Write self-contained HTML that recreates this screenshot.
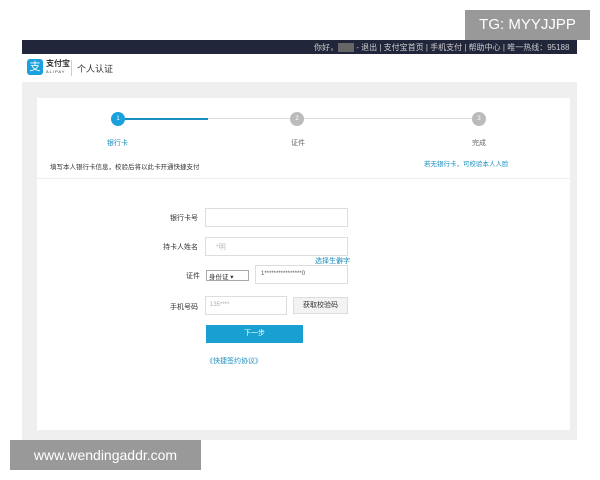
<!DOCTYPE html><html><head><meta charset="utf-8"><style>
*{margin:0;padding:0;box-sizing:border-box}
body{width:600px;height:480px;background:#fff;position:relative;font-family:"Liberation Sans","Noto Sans CJK SC",sans-serif;font-size:7px;color:#333;overflow:hidden}
.a{position:absolute}
.inp{position:absolute;border:1px solid #ddd;background:#fff;height:19px}
.c{position:absolute;width:14px;height:14px;border-radius:50%;color:#fff;font-size:6px;text-align:center;line-height:14px}
</style></head><body>
<div class="a" style="left:22px;top:40px;width:555px;height:14px;background:#22263a"></div>
<div class="a" style="left:314px;top:42px;color:#ccc;font-size:8px;white-space:nowrap">你好，<span style="background:#666;color:#666">xxxx</span> - 退出 | 支付宝首页 | 手机支付 | 帮助中心 | 唯一热线：95188</div>
<div class="a" style="left:22px;top:54px;width:555px;height:28px;background:#fff"></div>
<div class="a" style="left:27px;top:59px;width:16px;height:16px;background:#1aa0dc;border-radius:3px;color:#fff;font-size:11px;text-align:center;line-height:16px">支</div>
<div class="a" style="left:46px;top:58px;font-size:8px;font-weight:bold;color:#333">支付宝</div>
<div class="a" style="left:46px;top:69px;font-size:4px;letter-spacing:1px;color:#333">ALIPAY</div>
<div class="a" style="left:71px;top:60px;width:1px;height:16px;background:#ccc"></div>
<div class="a" style="left:77px;top:62px;font-size:9px;color:#333">个人认证</div>
<div class="a" style="left:22px;top:82px;width:555px;height:358px;background:#efefef"></div>
<div class="a" style="left:37px;top:98px;width:533px;height:332px;background:#fff"></div>
<div class="a" style="left:118px;top:118px;width:90px;height:2px;background:#1a8fc0"></div>
<div class="a" style="left:208px;top:118px;width:270px;height:1px;background:#ddd"></div>
<div class="c" style="left:111px;top:112px;background:#1aa0dc">1</div>
<div class="c" style="left:290px;top:112px;background:#bbb">2</div>
<div class="c" style="left:472px;top:112px;background:#bbb">3</div>
<div class="a" style="left:107px;top:138px;color:#1a8fc0">银行卡</div>
<div class="a" style="left:291px;top:138px;color:#666">证件</div>
<div class="a" style="left:472px;top:138px;color:#666">完成</div>
<div class="a" style="left:50px;top:161px;color:#333;font-size:6.5px">填写本人银行卡信息，校验后将以此卡开通快捷支付</div>
<div class="a" style="left:424px;top:158px;color:#1a8fc0;font-size:6.5px">若无银行卡，可校验本人人脸</div>
<div class="a" style="left:37px;top:178px;width:533px;height:1px;background:#eee"></div>
<div class="a" style="left:170px;top:213px">银行卡号</div>
<div class="inp" style="left:205px;top:208px;width:143px"></div>
<div class="a" style="left:163px;top:242px">持卡人姓名</div>
<div class="inp" style="left:205px;top:237px;width:143px"><span style="position:absolute;left:10px;top:4px;color:#bbb">*明</span></div>
<div class="a" style="left:315px;top:256px;color:#1a8fc0">选择生僻字</div>
<div class="a" style="left:186px;top:271px">证件</div>
<div class="a" style="left:206px;top:270px;width:43px;height:11px;border:1px solid #aaa;font-size:6.5px;padding-left:2px">身份证 ▾</div>
<div class="inp" style="left:255px;top:265px;width:93px"><span style="position:absolute;left:5px;top:5px;color:#555;font-size:6px">1****************0</span></div>
<div class="a" style="left:170px;top:302px">手机号码</div>
<div class="inp" style="left:205px;top:296px;width:82px"><span style="position:absolute;left:4px;top:5px;color:#aaa;font-size:6px">135****</span></div>
<div class="a" style="left:293px;top:297px;width:55px;height:17px;background:#f3f3f3;border:1px solid #ddd;text-align:center;line-height:15px">获取校验码</div>
<div class="a" style="left:206px;top:325px;width:97px;height:18px;background:#1aa0d0;color:#fff;text-align:center;line-height:18px">下一步</div>
<div class="a" style="left:206px;top:356px;color:#1a8fc0">《快捷签约协议》</div>
<div class="a" style="left:465px;top:10px;width:125px;height:30px;background:#999;color:#fff;font-size:15px;line-height:30px;text-align:center">TG: MYYJJPP</div>
<div class="a" style="left:10px;top:440px;width:191px;height:30px;background:#999;color:#fff;font-size:14px;line-height:30px;text-align:center">www.wendingaddr.com</div>
</body></html>
